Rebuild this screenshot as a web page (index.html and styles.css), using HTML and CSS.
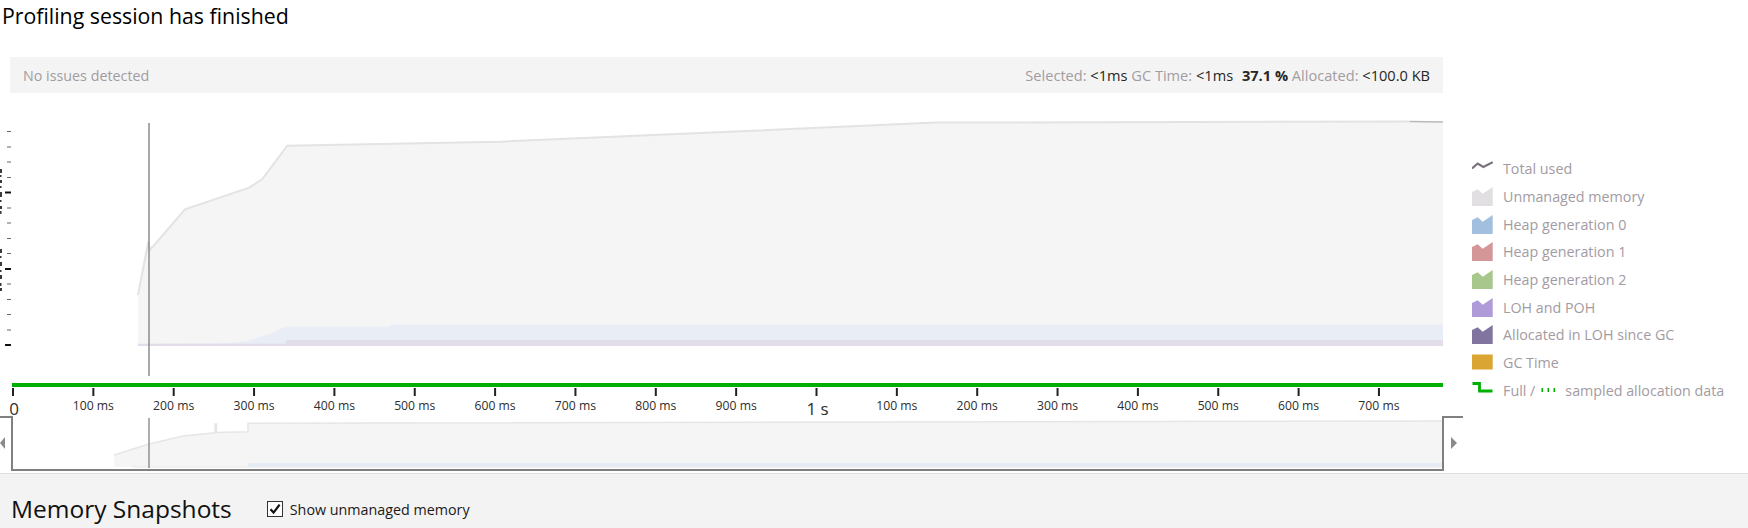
FILE: index.html
```html
<!DOCTYPE html>
<html>
<head>
<meta charset="utf-8">
<link rel="stylesheet" href="styles.css">
</head>
<body>
<div class="page">
  <h1 class="title">Profiling session has finished</h1>
  <div class="infobar">
    <span class="muted">No issues detected</span>
    <span class="stats"><span class="lbl">Selected:</span> <span class="val">&lt;1ms</span> <span class="lbl">GC Time:</span> <span class="val">&lt;1ms</span> <b class="val pct">37.1 %</b> <span class="lbl">Allocated:</span> <span class="val">&lt;100.0 KB</span></span>
  </div>
  <div class="chart-row">
    <svg class="chart" width="1465" height="380" viewBox="0 93 1465 380">
      <!-- clipped y-axis label fragments -->
      <g fill="#3a3a3a">
        <rect x="0" y="169" width="2" height="4"/>
        <rect x="0" y="175" width="1.5" height="2"/>
        <rect x="0" y="180" width="2" height="3"/>
        <rect x="0" y="186" width="1.5" height="2"/>
        <rect x="0" y="192" width="2" height="5"/>
        <rect x="0" y="200" width="1.5" height="2"/>
        <rect x="0" y="206" width="2" height="3"/>
        <rect x="0" y="211" width="1.5" height="3"/>
        <rect x="0" y="249" width="2" height="4"/>
        <rect x="0" y="256" width="1.5" height="2"/>
        <rect x="0" y="262" width="2" height="4"/>
        <rect x="0" y="270" width="1.5" height="2"/>
        <rect x="0" y="275" width="2" height="4"/>
        <rect x="0" y="283" width="1.5" height="3"/>
        <rect x="0" y="288" width="2" height="3"/>
      </g>
      <!-- y ticks -->
      <g fill="#666">
        <rect x="7" y="131" width="4" height="1"/>
        <rect x="7" y="146.5" width="4" height="1"/>
        <rect x="7" y="161.5" width="4" height="1"/>
        <rect x="7" y="177" width="4" height="1"/>
        <rect x="7" y="207.5" width="4" height="1"/>
        <rect x="7" y="222.5" width="4" height="1"/>
        <rect x="7" y="238" width="4" height="1"/>
        <rect x="7" y="253" width="4" height="1"/>
        <rect x="7" y="283.5" width="4" height="1"/>
        <rect x="7" y="299" width="4" height="1"/>
        <rect x="7" y="314" width="4" height="1"/>
        <rect x="7" y="329.5" width="4" height="1"/>
      </g>
      <g fill="#111">
        <rect x="5" y="191.5" width="6" height="2"/>
        <rect x="5" y="268" width="6" height="2"/>
        <rect x="5" y="344" width="6" height="2"/>
      </g>
      <!-- main data -->
      <polygon fill="#f5f5f5" points="138,345 138,295 148.3,241.7 150,250 185,209.3 249.3,187.7 262.3,179 287.3,145.7 500,141.7 936,122.6 1410,121.5 1443,122 1443,345"/>
      <polyline fill="none" stroke="#e3e3e3" stroke-width="2" points="138,295 148.3,241.7 150,250 185,209.3 249.3,187.7 262.3,179 287.3,145.7 500,141.7 936,122.6 1410,121.5"/>
      <polyline fill="none" stroke="#b9b9b9" stroke-width="1.5" points="1410,121.5 1443,122"/>
      <polygon fill="#e8edf6" points="138,345 138,344 230,343 248,341 258,337.5 270,334 285,326.7 390,326.7 392,324.5 1443,324.5 1443,345"/>
      <polygon fill="#e2dde8" points="138,345 138,343.8 285,343.8 287,340 1443,340 1443,346 138,346"/>
      <line x1="149" y1="123" x2="149" y2="376" stroke="#7a7a7a" stroke-width="1.3"/>
      <!-- time axis -->
      <rect x="12" y="383" width="1431" height="4" fill="#00ad00"/>
      <g fill="#222">
        <rect x="12" y="388" width="2" height="8"/>
        <rect x="92.35" y="388" width="2" height="8"/>
        <rect x="172.7" y="388" width="2" height="8"/>
        <rect x="253.05" y="388" width="2" height="8"/>
        <rect x="333.4" y="388" width="2" height="8"/>
        <rect x="413.75" y="388" width="2" height="8"/>
        <rect x="494.1" y="388" width="2" height="8"/>
        <rect x="574.45" y="388" width="2" height="8"/>
        <rect x="654.8" y="388" width="2" height="8"/>
        <rect x="735.15" y="388" width="2" height="8"/>
        <rect x="815.5" y="388" width="2" height="8"/>
        <rect x="895.85" y="388" width="2" height="8"/>
        <rect x="976.2" y="388" width="2" height="8"/>
        <rect x="1056.55" y="388" width="2" height="8"/>
        <rect x="1136.9" y="388" width="2" height="8"/>
        <rect x="1217.25" y="388" width="2" height="8"/>
        <rect x="1297.6" y="388" width="2" height="8"/>
        <rect x="1377.95" y="388" width="2" height="8"/>
      </g>
      <g class="tick" text-anchor="middle">
        <text class="big" x="14" y="415">0</text>
        <text x="93.35" y="410">100 ms</text>
        <text x="173.7" y="410">200 ms</text>
        <text x="254.05" y="410">300 ms</text>
        <text x="334.4" y="410">400 ms</text>
        <text x="414.75" y="410">500 ms</text>
        <text x="495.1" y="410">600 ms</text>
        <text x="575.45" y="410">700 ms</text>
        <text x="655.8" y="410">800 ms</text>
        <text x="736.15" y="410">900 ms</text>
        <text class="big" x="817.5" y="415">1 s</text>
        <text x="896.85" y="410">100 ms</text>
        <text x="977.2" y="410">200 ms</text>
        <text x="1057.55" y="410">300 ms</text>
        <text x="1137.9" y="410">400 ms</text>
        <text x="1218.25" y="410">500 ms</text>
        <text x="1298.6" y="410">600 ms</text>
        <text x="1378.95" y="410">700 ms</text>
      </g>
      <!-- overview -->
      <polygon fill="#f5f5f5" points="114,467 114,455 149,444 183,436 215,432.7 215,424 216.5,424 216.5,432.5 248,431.7 248,423.3 1443,421 1443,467"/>
      <polyline fill="none" stroke="#e6e6e6" stroke-width="1.5" points="114,455 149,444 183,436 215,432.7 215,424 216.5,424 216.5,432.5 248,431.7 248,423.3 1443,421"/>
      <rect x="248" y="463" width="1195" height="4" fill="#e6ecf5"/>
      <line x1="132" y1="467" x2="1443" y2="467" stroke="#e8e8ee" stroke-width="1"/>
      <line x1="149" y1="418" x2="149" y2="468" stroke="#777" stroke-width="1.2"/>
      <path d="M0,417 H12 V470 H1443 V417 H1463" fill="none" stroke="#808080" stroke-width="2"/>
      <polygon fill="#8a8a8a" points="5,437 0,443 5,449"/>
      <polygon fill="#8a8a8a" points="1451,437 1457,443 1451,449"/>
    </svg>
    <ul class="legend">
      <li><svg class="ic" width="21" height="19" viewBox="0 0 21 19"><polyline points="0,9.5 5.7,4.5 11.3,7.9 20.7,3.2" fill="none" stroke="#7a727a" stroke-width="2.2"/></svg>Total used</li>
      <li><svg class="ic" width="21" height="19" viewBox="0 0 21 19"><polygon points="0,5 5.7,2.3 10.7,6.7 20.7,0 20.7,19 0,19" fill="#e1dfe1"/></svg>Unmanaged memory</li>
      <li><svg class="ic" width="21" height="19" viewBox="0 0 21 19"><polygon points="0,5 5.7,2.3 10.7,6.7 20.7,0 20.7,19 0,19" fill="#a3bfdf"/></svg>Heap generation 0</li>
      <li><svg class="ic" width="21" height="19" viewBox="0 0 21 19"><polygon points="0,5 5.7,2.3 10.7,6.7 20.7,0 20.7,19 0,19" fill="#d49697"/></svg>Heap generation 1</li>
      <li><svg class="ic" width="21" height="19" viewBox="0 0 21 19"><polygon points="0,5 5.7,2.3 10.7,6.7 20.7,0 20.7,19 0,19" fill="#a8c78c"/></svg>Heap generation 2</li>
      <li><svg class="ic" width="21" height="19" viewBox="0 0 21 19"><polygon points="0,5 5.7,2.3 10.7,6.7 20.7,0 20.7,19 0,19" fill="#ae9bd7"/></svg>LOH and POH</li>
      <li><svg class="ic" width="21" height="19" viewBox="0 0 21 19"><polygon points="0,5 5.7,2.3 10.7,6.7 20.7,0 20.7,19 0,19" fill="#81749f"/></svg>Allocated in LOH since GC</li>
      <li><svg class="ic" width="21" height="19" viewBox="0 0 21 19"><rect x="0" y="1.5" width="20.7" height="15" fill="#dba533"/></svg>GC Time</li>
      <li><svg class="ic" width="21" height="19" viewBox="0 0 21 19"><polyline points="0.5,2.5 7.5,2.5 7.5,10 20.5,10" fill="none" stroke="#00b000" stroke-width="2.8"/></svg>Full /<svg class="dots" width="15" height="6" viewBox="0 0 15 6"><rect x="0.5" y="1" width="1.6" height="4" fill="#00b000"/><rect x="6.5" y="1" width="1.6" height="4" fill="#00b000"/><rect x="12.5" y="1" width="1.6" height="4" fill="#00b000"/></svg>sampled allocation data</li>
    </ul>
  </div>
  <div class="snapshots">
    <h2 class="snap-title">Memory Snapshots</h2>
    <label class="check">
      <span class="box"><svg width="14" height="14" viewBox="0 0 14 14"><path d="M2.5,7.2 L5.6,10.6 L11.6,2.6" fill="none" stroke="#111" stroke-width="2.2"/></svg></span>
      <span class="check-label">Show unmanaged memory</span>
    </label>
  </div>
</div>
</body>
</html>
```

FILE: styles.css
```css
html, body {
  margin: 0;
  padding: 0;
  overflow: hidden;
  background: #ffffff;
}

.page {
  width: 1748px;
  height: 528px;
  font-family: "Open Sans", "Noto Sans", sans-serif;
  color: #222;
}

.title {
  margin: 0;
  height: 57px;
  box-sizing: border-box;
  padding: 2px 0 0 2px;
  font-size: 21.3px;
  font-weight: 400;
  line-height: 28px;
  color: #000;
}

.infobar {
  margin-left: 10px;
  width: 1433px;
  height: 36px;
  box-sizing: border-box;
  padding: 0 13px;
  background: #f4f4f4;
  display: flex;
  justify-content: space-between;
  align-items: center;
  font-size: 14.3px;
}

.stats {
  font-size: 14.6px;
}

.muted, .lbl {
  color: #a29ca2;
}

.val {
  color: #262626;
}

.pct {
  font-weight: 700;
  margin-left: 5px;
}

.chart-row {
  display: flex;
  height: 380px;
}

.chart {
  flex: none;
  display: block;
}

.tick text {
  font-family: "Open Sans", sans-serif;
  font-size: 12.2px;
  fill: #2e2e2e;
}

.tick text.big {
  font-size: 17px;
}

.legend {
  list-style: none;
  margin: 0;
  padding: 62px 0 0 7px;
  font-size: 14.3px;
  color: #a39ba3;
}

.legend li {
  height: 27.7px;
  display: flex;
  align-items: center;
  gap: 10px;
  white-space: nowrap;
}

.ic {
  flex: none;
  display: block;
}

.dots {
  display: block;
  margin: 0 -1px 0 -4px;
}

.snapshots {
  height: 55px;
  box-sizing: border-box;
  border-top: 1px solid #dedede;
  background: #f3f3f3;
  display: flex;
  align-items: flex-start;
  padding: 20px 0 0 11px;
  overflow: hidden;
}

.snap-title {
  margin: 0;
  font-size: 24.5px;
  font-weight: 400;
  line-height: 30px;
  color: #111;
}

.check {
  display: flex;
  align-items: center;
  height: 30px;
  margin-left: 35px;
}

.box {
  width: 16px;
  height: 16px;
  box-sizing: border-box;
  border: 1px solid #333;
  background: #fff;
  display: flex;
  align-items: center;
  justify-content: center;
}

.check-label {
  margin-left: 7px;
  font-size: 14.3px;
  color: #1a1a1a;
}
```
